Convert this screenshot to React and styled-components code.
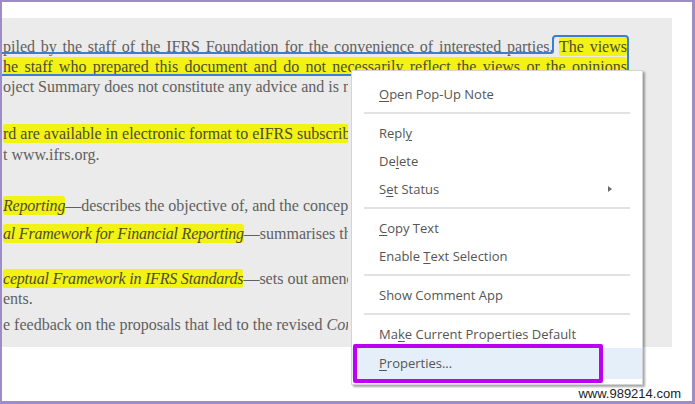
import React from "react";
import styled, { createGlobalStyle } from "styled-components";

const GlobalStyle = createGlobalStyle`
  html, body {
    margin: 0;
    padding: 0;
    background: #ffffff;
  }
`;

const Frame = styled.div`
  position: relative;
  width: 695px;
  height: 404px;
  box-sizing: border-box;
  border: 2px solid #9d8cc6;
  border-right-width: 3px;
  border-bottom-width: 3px;
  background: #ffffff;
  overflow: hidden;
  padding-top: 16px;
  display: flex;
  flex-direction: column;
`;

const Page = styled.div`
  position: relative;
  width: 670px;
  height: 329px;
  flex-shrink: 0;
  background: #ebebeb;
  overflow: hidden;
  padding-top: 19px;
  box-sizing: border-box;
  font-family: "Liberation Serif", "Times New Roman", serif;
  font-size: 16px;
  color: #606060;
`;

const Line = styled.div`
  width: ${(p) => (p.$clip ? "345px" : "624px")};
  margin-top: ${(p) => p.$gap || 0}px;
  margin-left: 1px;
  height: 20px;
  line-height: 20px;
  white-space: ${(p) => (p.$justify ? "normal" : "nowrap")};
  text-align: ${(p) => (p.$justify ? "justify" : "left")};
  text-align-last: ${(p) => (p.$justify ? "justify" : "auto")};
  overflow: hidden;
`;

const Hl = styled.span`
  background: #f2f214;
  color: #4d4d30;
  border-radius: 3px;
  padding: 1px 0;
  font-style: ${(p) => (p.$italic ? "italic" : "normal")};
  letter-spacing: ${(p) => (p.$italic ? "-0.2px" : "normal")};
`;

const Em = styled.em`
  font-style: italic;
`;

const Outline = styled.svg`
  position: absolute;
  left: 0;
  top: 0;
  pointer-events: none;
`;

const Footer = styled.div`
  flex: 1;
  display: flex;
  align-items: flex-end;
  justify-content: flex-end;
  padding: 0 11px 0 0;
`;

const Watermark = styled.span`
  font-family: "Liberation Sans", Arial, sans-serif;
  font-size: 13px;
  color: #222222;
  line-height: 14px;
`;

const Menu = styled.div`
  position: absolute;
  left: 349px;
  top: 68px;
  width: 292px;
  box-sizing: border-box;
  padding: 9px 0 5px;
  background: #ffffff;
  border: 1px solid #d4d4d4;
  box-shadow: 2px 2px 2px rgba(0, 0, 0, 0.35);
  font-family: "Open Sans", "Noto Sans", sans-serif;
  font-size: 13px;
  color: #555555;
`;

const Item = styled.div`
  position: relative;
  height: ${(p) => (p.$hover ? 31 : 28)}px;
  line-height: ${(p) => (p.$hover ? 31 : 28)}px;
  padding-left: 27px;
  background: ${(p) => (p.$hover ? "#e4eff9" : "transparent")};
  white-space: nowrap;
`;

const Key = styled.span`
  text-decoration: underline;
  text-underline-offset: 2px;
`;

const Arrow = styled.span`
  position: absolute;
  left: 256px;
  top: 11px;
  width: 0;
  height: 0;
  border-left: 4px solid #6a6a6a;
  border-top: 3.5px solid transparent;
  border-bottom: 3.5px solid transparent;
`;

const Separator = styled.div`
  height: 2px;
  margin: 4px 12px 5px 12px;
  background: #e2e2e2;
`;

const Marker = styled.div`
  position: absolute;
  left: 351px;
  top: 342px;
  width: 250px;
  height: 39px;
  box-sizing: border-box;
  border: 4px solid #bd00f2;
  border-radius: 2px;
  pointer-events: none;
`;

const App = () => {
  return (
    <>
      <GlobalStyle />
      <Frame>
        <Page>
          <Line $justify>
            piled by the staff of the IFRS Foundation for the convenience of
            interested parties. <Hl>The views</Hl>
          </Line>
          <Line $justify>
            <Hl>
              he staff who prepared this document and do not necessarily
              reflect the views or the opinions
            </Hl>
          </Line>
          <Line $clip>
            oject Summary does not constitute any advice and is not a
            substitute for reading the Standards.
          </Line>
          <Line $clip $gap={27}>
            <Hl>
              rd are available in electronic format to eIFRS subscribers on the
              IFRS Foundation website
            </Hl>
          </Line>
          <Line $clip $gap={1}>
            t www.ifrs.org.
          </Line>
          <Line $clip $gap={31}>
            <Hl $italic>Reporting</Hl>—describes the objective of, and the
            concepts for, general purpose financial reporting.
          </Line>
          <Line $clip $gap={8}>
            <Hl $italic>al Framework for Financial Reporting</Hl>—summarises
            the basis for conclusions.
          </Line>
          <Line $clip $gap={25}>
            <Hl $italic>ceptual Framework in IFRS Standards</Hl>—sets out
            amendments to affected Standards so that they refer to the new
          </Line>
          <Line $clip>ents.</Line>
          <Line $clip $gap={6}>
            e feedback on the proposals that led to the revised{" "}
            <Em>Conceptual Framework.</Em>
          </Line>
          <Outline width="670" height="70" viewBox="0 0 670 70">
            <path
              d="M -5 35 L 549 35 Q 551 35 551 33 L 551 21 Q 551 18 554 18 L 623 18 Q 626 18 626 21 L 626 54 Q 626 57 623 57 L -5 57"
              fill="none"
              stroke="#3b7ed6"
              strokeWidth="2"
            />
          </Outline>
        </Page>
        <Footer>
          <Watermark>www.989214.com</Watermark>
        </Footer>
        <Menu>
          <Item>
            <Key>O</Key>pen Pop-Up Note
          </Item>
          <Separator />
          <Item>
            Repl<Key>y</Key>
          </Item>
          <Item>
            De<Key>l</Key>ete
          </Item>
          <Item>
            S<Key>e</Key>t Status
            <Arrow />
          </Item>
          <Separator />
          <Item>
            <Key>C</Key>opy Text
          </Item>
          <Item>
            Enable <Key>T</Key>ext Selection
          </Item>
          <Separator />
          <Item>Show Comment App</Item>
          <Separator />
          <Item>
            Ma<Key>k</Key>e Current Properties Default
          </Item>
          <Item $hover>
            <Key>P</Key>roperties...
          </Item>
        </Menu>
        <Marker />
      </Frame>
    </>
  );
};

export default App;
